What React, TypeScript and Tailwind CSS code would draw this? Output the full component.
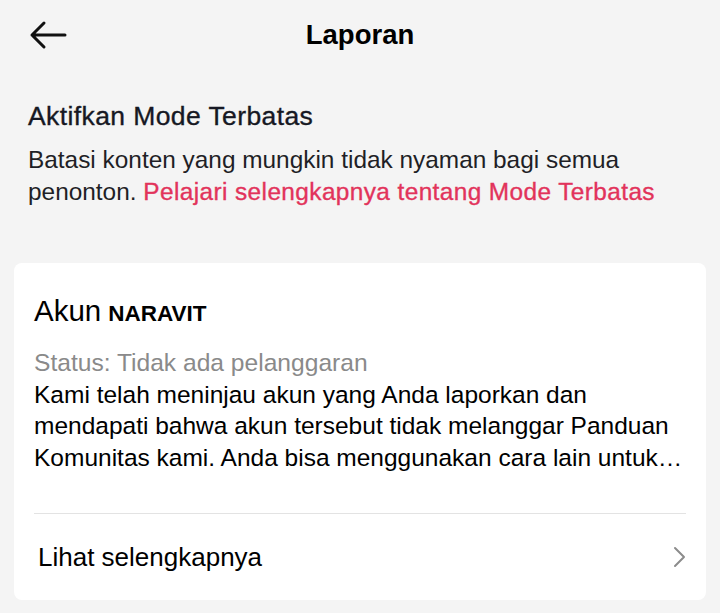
import React from "react";

export default function App() {
  return (
    <div
      className="w-[720px] h-[613px] bg-[#f4f4f4] overflow-hidden text-[#161823]"
      style={{ fontFamily: "'Liberation Sans', Arial, sans-serif" }}
    >
      {/* top bar */}
      <div className="relative h-[70px] flex items-center justify-center">
        <svg
          className="absolute left-[29px] top-[20px]"
          width="38"
          height="30"
          viewBox="0 0 38 30"
          fill="none"
          stroke="#111"
          strokeWidth="3"
          strokeLinecap="round"
          strokeLinejoin="round"
        >
          <path d="M36 15H3M15 3L3 15l12 12" />
        </svg>
        <h1 className="text-[27.5px] font-bold text-black">Laporan</h1>
      </div>

      {/* restricted mode notice */}
      <div className="px-[28px] pt-[30px]">
        <h2 className="text-[26.5px] leading-[32px] text-[#161823] tracking-[0.4px] [-webkit-text-stroke:0.35px_#161823]">
          Aktifkan Mode Terbatas
        </h2>
        <p className="mt-[12px] text-[24.4px] leading-[32px] text-[#1f1f26] whitespace-nowrap">
          Batasi konten yang mungkin tidak nyaman bagi semua
          <br />
          penonton.{" "}
          <span className="text-[#e2335b] tracking-[0.4px] [-webkit-text-stroke:0.35px_#e2335b]">
            Pelajari selengkapnya tentang Mode Terbatas
          </span>
        </p>
      </div>

      {/* report card */}
      <div className="mx-[14px] mt-[55px] bg-white rounded-[8px] px-[20px]">
        <div className="pt-[30px] pb-[40px] border-b border-[#e3e3e3]">
          <div className="flex items-baseline text-black">
            <span className="text-[29.5px] leading-[36px]">Akun</span>
            <span className="ml-[7px] text-[22.5px] font-bold">NARAVIT</span>
          </div>
          <p className="mt-[16px] text-[24.6px] leading-[32px] text-[#8a8a8a]">Status: Tidak ada pelanggaran</p>
          <p className="text-[24.5px] leading-[31.5px] text-black whitespace-nowrap">
            Kami telah meninjau akun yang Anda laporkan dan
            <br />
            mendapati bahwa akun tersebut tidak melanggar Panduan
            <br />
            Komunitas kami. Anda bisa menggunakan cara lain untuk…
          </p>
        </div>
        <div className="h-[86px] flex items-center justify-between">
          <span className="ml-[4px] text-[26px] text-black">Lihat selengkapnya</span>
          <svg width="14" height="22" viewBox="0 0 14 22" fill="none" stroke="#8c8c8c" strokeWidth="2" strokeLinecap="round" strokeLinejoin="round">
            <path d="M3 2l9 9-9 9" />
          </svg>
        </div>
      </div>
    </div>
  );
}
